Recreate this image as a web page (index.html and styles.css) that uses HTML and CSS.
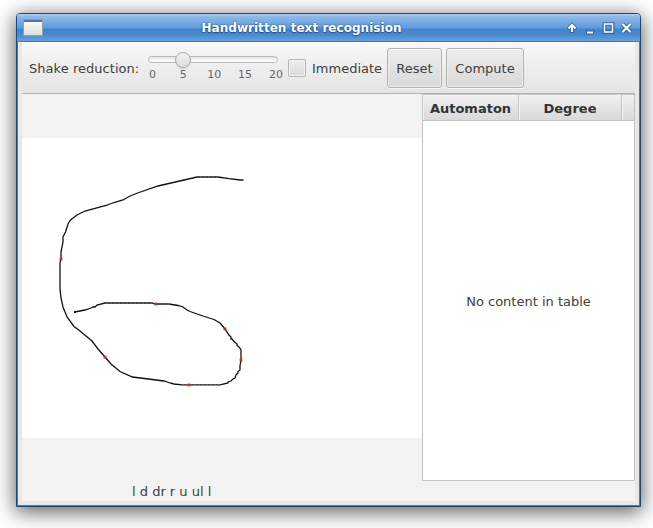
FILE: index.html
```html
<!DOCTYPE html>
<html lang="en">
<head>
<meta charset="utf-8">
<title>Handwritten text recognision</title>
<link rel="stylesheet" href="styles.css">
</head>
<body>
<div class="window">
  <header class="titlebar">
    <svg class="app-icon" width="20" height="18" viewBox="0 0 20 18">
      <defs><linearGradient id="ic" x1="0" y1="0" x2="0" y2="1"><stop offset="0" stop-color="#fff"/><stop offset="1" stop-color="#dcdeda"/></linearGradient></defs>
      <rect x=".5" y=".5" width="19" height="16" fill="url(#ic)" stroke="#999d9f"/>
      <rect x="1" y="1" width="18" height="2" fill="#4b78b5"/>
    </svg>
    <h1 class="title">Handwritten text recognision</h1>
    <svg class="controls" width="66" height="14" viewBox="0 0 66 14">
      <g fill="none" stroke="#28598f" stroke-width="4" opacity=".7">
        <path d="M5 12V4M1 8.200L5 4L9 8.200"/><path d="M19 11.500h8"/><path d="M37.500 3h8v8h-8z"/><path d="M55.500 3l8 8M63.500 3l-8 8"/>
      </g>
      <g fill="none" stroke="#fff" stroke-width="2">
        <path d="M5 11V4"/><path d="M1.500 7.500L5 4L8.500 7.500"/><path d="M20 11.500h6"/><path d="M37.500 3h8v8h-8z" stroke-width="1.500"/><path d="M55.500 3l8 8M63.500 3l-8 8"/>
      </g>
    </svg>
  </header>
  <div class="client">
    <div class="toolbar">
      <span class="label">Shake reduction:</span>
      <div class="slider">
        <div class="track"><i class="thumb"></i></div>
        <div class="ticks"><span>0</span><span>5</span><span>10</span><span>15</span><span>20</span></div>
      </div>
      <span class="check"></span>
      <span class="check-label">Immediate</span>
      <button class="button reset">Reset</button>
      <button class="button compute">Compute</button>
    </div>
    <main class="content">
      <section class="drawing">
        <svg class="canvas" width="400" height="300" viewBox="22 138 400 300">
          <path class="stroke" d="M243.500 180H240L229 178.700L218 177H197L158 186L139 192.500L130 196L123 200L114 202.500L106 205.500L85 211L77 215L70.500 220L68 224L65.500 232L63 237V242L61 252V259L60 263V289L61 298L63 307L67 317L74 326.500L80 331L92 341L98 349L105 357L111 364L120 371.500L132.500 377L164 381L170 383L174 384L182 384.800H220L228 383V382L231 381L233 379L235 378L236 375L238 373V371.500L240 370V366L241 360V350L239 347L237 345.500V344L234 341.500L232 339L231 339V337L229 335L225 329L220 323L214 319.500L203 316L190 311.500L187 310L183 307L178 305.500L169 304H155L152 303H105L97 305L95 307H93L91 308L85 310L74.500 312"/>
          <path class="samples" d="M243.500 180H240M218 177H197M63 237V241M61 252V259M60 263V289M182 384.800H220M241 360V350M170 304H155M152 303H105"/>
          <g class="dots"><rect x="59.500" y="257.500" width="3" height="3"/><rect x="103.500" y="355.500" width="3" height="3"/><rect x="187.500" y="383.500" width="3" height="3"/><rect x="239.500" y="358.500" width="3" height="3"/><rect x="223.500" y="327.500" width="3" height="3"/><rect x="154.500" y="302.500" width="3" height="3"/></g>
          <path class="pen-down" d="M74 312h2"/>
        </svg>
        <div class="result">l d dr r u ul l</div>
      </section>
      <section class="table">
        <div class="table-head"><span>Automaton</span><span>Degree</span><span></span></div>
        <div class="placeholder">No content in table</div>
      </section>
    </main>
  </div>
</div>
</body>
</html>
```
FILE: styles.css
```css
* { box-sizing: border-box; }
body {
  margin: 0;
  width: 653px;
  height: 528px;
  padding: 13px 0 0 16px;
  overflow: hidden;
  background: #fff;
  font: 13px/16px "DejaVu Sans", sans-serif;
  color: #404040;
}
.window {
  width: 625px;
  height: 494px;
  border: 1px solid #1c4873;
  border-radius: 4px 4px 0 0;
  background: #e8e8e7;
  box-shadow: 0 4px 20px 1px rgba(0, 0, 0, .64);
}
.titlebar {
  display: flex;
  align-items: center;
  height: 28px;
  padding: 0 7px 0 6px;
  border-bottom: 1px solid #3c7dc5;
  border-radius: 3px 3px 0 0;
  background: linear-gradient(#b7d5f2 0, #91bbe8 2px, #5e9adb 14px, #4385cb 15px, #4888cb 20px, #659fdd 27px);
}
.app-icon { display: block; }
.title {
  flex: 1;
  margin: 0;
  padding-right: 7px;
  text-align: center;
  font-size: 12px;
  line-height: 16px;
  letter-spacing: .04px;
  color: #fff;
  text-shadow: 0 0 2px #17477d, 0 1px 1px #28598f;
}
.controls { display: block; }
.client {
  height: 464px;
  padding: 0 4px 4px;
  border: solid #3c7dc5;
  border-width: 0 1px 1px;
}
.toolbar {
  display: flex;
  align-items: center;
  height: 52px;
  padding-left: 7px;
  border-bottom: 1px solid #b1b1b1;
  background: linear-gradient(#f8f8f8, #e4e4e4);
}
.label {
  width: 119px;
  padding-top: 2px;
  letter-spacing: .04px;
  white-space: nowrap;
}
.slider { width: 130px; height: 38px; }
.track {
  position: relative;
  height: 7px;
  margin-top: 7px;
  border: 1px solid #b9b9b9;
  border-radius: 4px;
  background: linear-gradient(#e6e6e6, #fff);
}
.thumb {
  position: absolute;
  left: 26px;
  top: -5px;
  width: 16px;
  height: 16px;
  border: 1px solid #aaa;
  border-radius: 50%;
  background: linear-gradient(#f3f3f3, #dcdcdc);
  box-shadow: 0 1px 1px rgba(0, 0, 0, .1);
}
.ticks {
  display: grid;
  grid-template-columns: repeat(5, 30.9px);
  width: 155px;
  margin: 5px 0 0 -11px;
  text-align: center;
  font-size: 11px;
  line-height: 13px;
  color: #666;
}
.check {
  width: 18px;
  height: 18px;
  margin-left: 10px;
  border: 1px solid #b5b5b5;
  border-radius: 2px;
  background: linear-gradient(#eee, #dadada);
  box-shadow: inset 0 0 0 1px #f2f2f2;
}
.check-label { width: 75px; margin-left: 6px; padding-top: 2px; }
.button {
  height: 40px;
  padding: 2px 0 0;
  border: 1px solid #b3b3b3;
  border-radius: 3px;
  background: linear-gradient(#ededed, #d9d9d9);
  box-shadow: inset 0 1px 0 #f8f8f8, inset 0 0 0 1px #ebebeb, 0 1px 0 #f4f4f4;
  font: inherit;
  color: inherit;
}
.reset { width: 55px; }
.compute { width: 78px; margin-left: 4px; }
.content {
  display: flex;
  height: 407px;
  background: #f3f3f3;
}
.drawing { width: 400px; padding-top: 44px; }
.canvas { display: block; background: #fff; }
.stroke { fill: none; stroke: #111; stroke-width: 1.3; }
.samples { fill: none; stroke: #777; stroke-width: .7; stroke-dasharray: 2 2; }
.dots { fill: #c9301f; fill-opacity: .8; }
.pen-down { stroke: #111; stroke-width: 2; }
.result { padding: 46px 0 0 110px; white-space: pre; }
.table {
  display: flex;
  flex-direction: column;
  width: 213px;
  height: 387px;
  border: 1px solid #c4c4c4;
  background: #fff;
}
.table-head {
  display: grid;
  grid-template-columns: 96px 103px 12px;
  height: 26px;
  border-bottom: 1px solid #c4c4c4;
  font-weight: bold;
  line-height: 27px;
  text-align: center;
  color: #333;
}
.table-head span {
  height: 25px;
  border-right: 1px solid #c4c4c4;
  background: linear-gradient(#f0f0f0, #d9d9d9);
  box-shadow: inset 1px 1px 0 #f5f5f5;
}
.table-head span:last-child { border-right: 0; }
.placeholder {
  display: flex;
  flex: 1;
  align-items: center;
  justify-content: center;
  padding-top: 2px;
}
```
